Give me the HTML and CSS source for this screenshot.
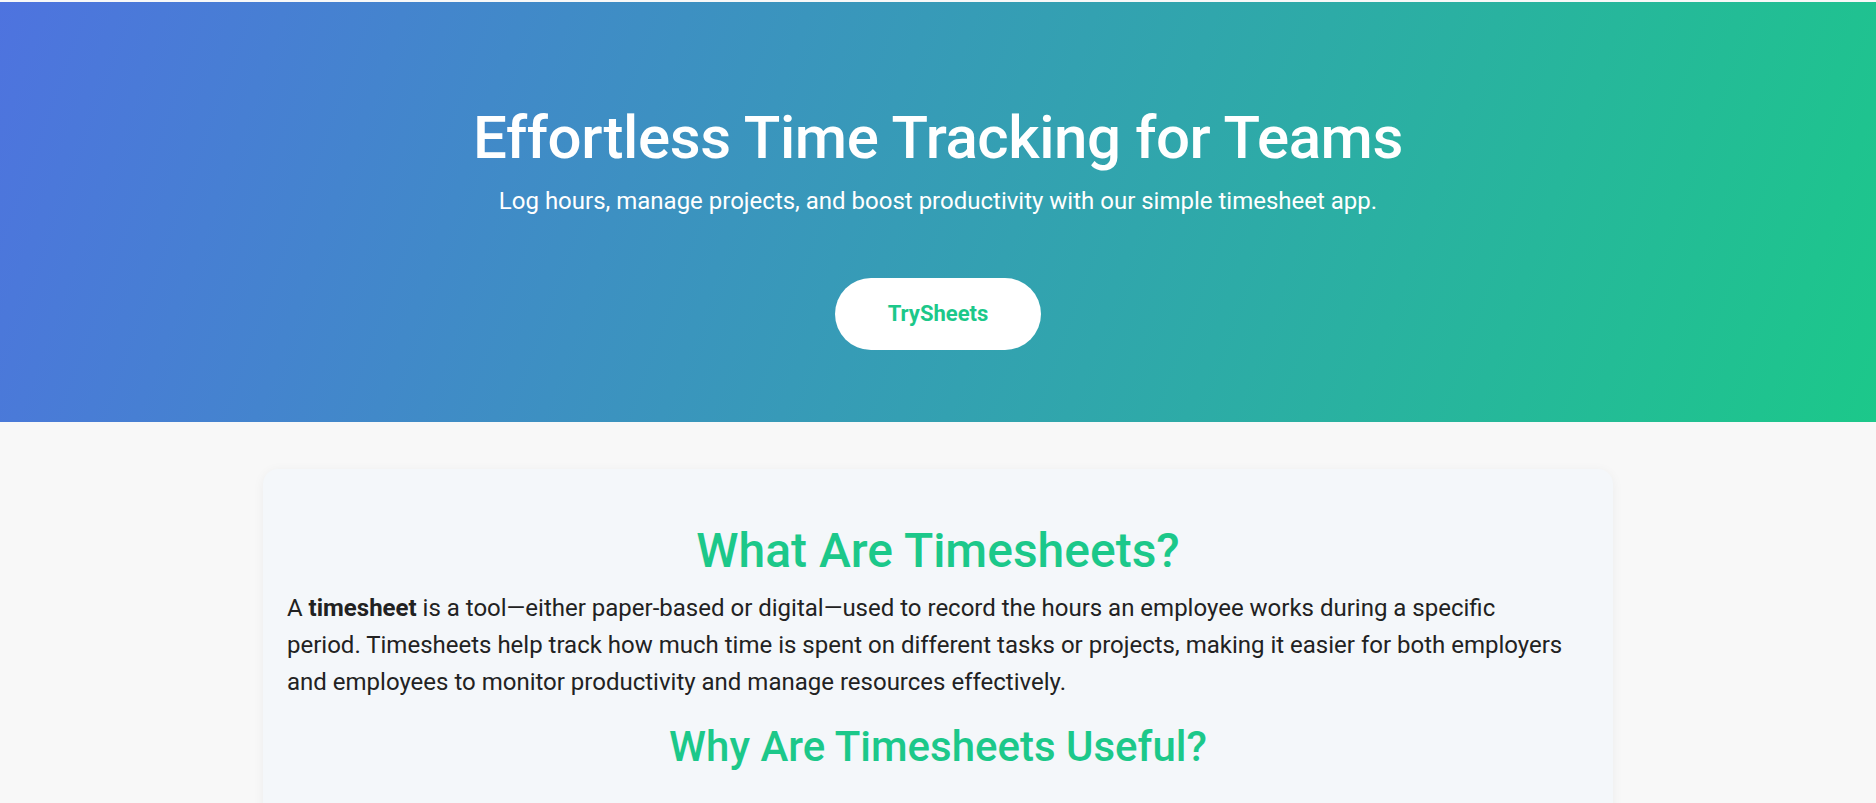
FILE: index.html
```html
<!DOCTYPE html>
<html lang="en">
<head>
<meta charset="utf-8">
<title>TrySheets</title>
<link rel="stylesheet" href="styles.css">
</head>
<body>
  <header class="hero">
    <h1 class="hero-title">Effortless Time Tracking for Teams</h1>
    <p class="hero-sub">Log hours, manage projects, and boost productivity with our simple timesheet app.</p>
    <a class="hero-btn" href="#">TrySheets</a>
  </header>
  <main class="content">
    <section class="card">
      <h2 class="card-title">What Are Timesheets?</h2>
      <p class="card-text">A <strong>timesheet</strong> is a tool—either paper-based or digital—used to record the hours an employee works during a specific<br>period. Timesheets help track how much time is spent on different tasks or projects, making it easier for both employers and employees to monitor productivity and manage resources effectively.</p>
      <h3 class="card-subtitle">Why Are Timesheets Useful?</h3>
    </section>
  </main>
</body>
</html>
```
FILE: styles.css
```css
html, body {
  margin: 0;
  padding: 0;
}
body {
  padding-top: 2px;
  background: #f8f8f8;
  font-family: Roboto, "Noto Sans", sans-serif;
  color: #222;
}
.hero {
  height: 420px;
  box-sizing: border-box;
  padding-top: 100px;
  text-align: center;
  color: #fff;
  background: linear-gradient(110deg, #4e73df 0%, #1cc88a 100%);
  display: flex;
  flex-direction: column;
  align-items: center;
}
.hero-title {
  margin: 0;
  font-size: 60px;
  font-weight: 500;
  letter-spacing: -0.4px;
  line-height: 72px;
}
.hero-sub {
  margin: 9px 0 0;
  font-size: 24px;
  line-height: 36px;
  font-weight: 400;
}
.hero-btn {
  margin-top: 59px;
  display: inline-block;
  background: #fff;
  color: #1cc88a;
  text-decoration: none;
  font-weight: 700;
  font-size: 22px;
  line-height: 26px;
  padding: 23px 53px 23px;
  border-radius: 40px;
}
.content {
  padding: 47px 0 40px;
  display: flex;
  justify-content: center;
}
.card {
  width: 1350px;
  box-sizing: border-box;
  background: #f4f7fa;
  border-radius: 15px;
  padding: 53px 24px 60px;
  box-shadow: 0 2px 12px rgba(0, 0, 0, 0.05);
}
.card-title {
  margin: 0 0 10px;
  text-align: center;
  color: #1cc88a;
  font-size: 48px;
  font-weight: 500;
  line-height: 1.2;
}
.card-subtitle {
  margin: 0;
  text-align: center;
  color: #1cc88a;
  font-size: 42px;
  font-weight: 500;
  line-height: 1.2;
}
.card-text {
  margin: 0 0 21px;
  font-size: 24px;
  letter-spacing: 0;
  line-height: 37px;
  color: #222;
}
.card-text strong {
  font-weight: 700;
}
```
